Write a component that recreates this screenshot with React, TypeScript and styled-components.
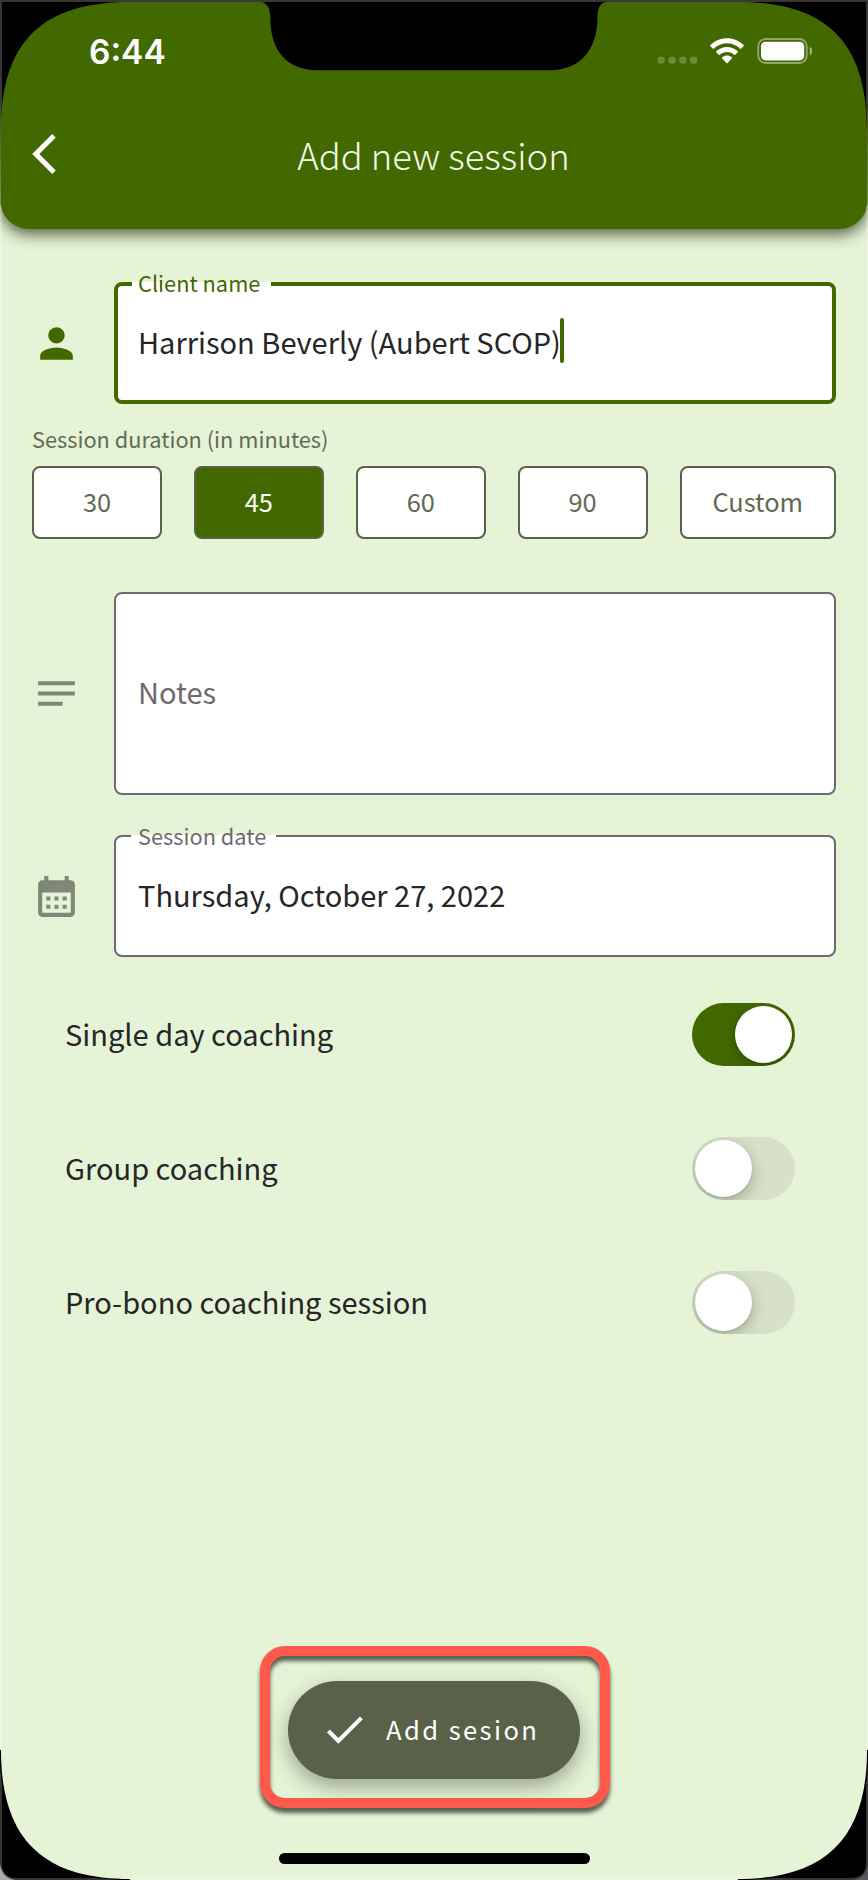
import React, { useState } from "react";
import styled, { createGlobalStyle } from "styled-components";

const green = "#426900";
const olive = "#596148";
const mint = "#e5f3d6";
const grey = "#6e6b70";

const GlobalStyle = createGlobalStyle`
  * { box-sizing: border-box; }
  html, body { margin: 0; padding: 0; background: #000; }
  body { font-family: "Noto Sans CJK SC", "Noto Sans", sans-serif; color: #262727; }
  button { font: inherit; cursor: pointer; }
`;

const Screen = styled.main`
  position: relative;
  display: flex;
  flex-direction: column;
  width: 868px;
  height: 1880px;
  overflow: hidden;
  background: ${mint};
`;

const Bezel = styled.svg`
  position: absolute;
  inset: 0;
  pointer-events: none;
`;

const Header = styled.header`
  flex: none;
  height: 229px;
  background: ${green};
  border-radius: 0 0 29px 29px;
  box-shadow: 0 5px 15px rgba(30, 40, 15, 0.75);
  color: #fff;
`;

const StatusBar = styled.div`
  display: flex;
  justify-content: space-between;
  height: 104px;
  padding: 38px 56px 0 89px;
`;

const Time = styled.span`
  padding-top: 1px;
  font: 600 33.5px/26px Inter, sans-serif;
`;

const StatusIcons = styled.svg`
  width: 156px;
  height: 27px;
`;

const NavBar = styled.div`
  display: grid;
  grid-template-columns: 60px 1fr 60px;
  align-items: center;
  height: 100px;
  padding: 0 33px 0 32px;
`;

const IconButton = styled.button`
  display: flex;
  padding: 0;
  border: 0;
  background: none;
  color: inherit;
`;

const Title = styled.h1`
  margin: 0 0 1px;
  text-align: center;
  font-size: 36.4px;
  font-weight: 300;
  line-height: 54px;
  color: #f4f8ec;
`;

const Form = styled.form`
  display: flex;
  flex-direction: column;
  flex: 1;
  padding: 53px 32px 0;
`;

const FieldRow = styled.div<{ $color: string; $gap?: number }>`
  display: grid;
  grid-template-columns: 49px 722px;
  column-gap: 33px;
  align-items: center;
  margin-top: ${(p) => p.$gap ?? 0}px;
  color: ${(p) => p.$color};
`;

const Field = styled.div<{ $height: number; $active?: boolean }>`
  position: relative;
  display: flex;
  align-items: center;
  height: ${(p) => p.$height}px;
  padding-left: ${(p) => (p.$active ? 20 : 22)}px;
  padding-bottom: 5px;
  border: ${(p) => (p.$active ? `4px solid ${green}` : `2px solid ${grey}`)};
  border-radius: 8px;
  background: #fff;
`;

const FloatingLabel = styled.label<{ $width: number; $active?: boolean }>`
  position: absolute;
  top: ${(p) => (p.$active ? -4 : -2)}px;
  left: ${(p) => (p.$active ? 14 : 15)}px;
  width: ${(p) => p.$width}px;
  height: 4px;
  padding-left: ${(p) => (p.$active ? 6 : 7)}px;
  background: #fff;
  font-size: 21.8px;
  line-height: 1px;
  white-space: nowrap;
  color: ${(p) => (p.$active ? green : grey)};
`;

const Value = styled.span<{ $muted?: boolean }>`
  font-size: 29.03px;
  line-height: 44px;
  white-space: nowrap;
  color: ${(p) => (p.$muted ? grey : "#262628")};
`;

const Caret = styled.i`
  width: 4px;
  height: 45px;
  margin: 0 0 0 -1px;
  border-radius: 2px;
  background: ${green};
`;

const DurationLabel = styled.div`
  margin-top: 19px;
  font-size: 21.77px;
  line-height: 32px;
  color: #636b54;
`;

const Durations = styled.div`
  display: grid;
  grid-template-columns: repeat(4, 130px) 156.5px;
  justify-content: space-between;
  margin-top: 11px;
`;

const Duration = styled.button<{ $selected: boolean }>`
  height: 73px;
  padding: 0 0 3px;
  border: 2px solid ${olive};
  border-radius: 8px;
  background: ${(p) => (p.$selected ? green : "#fff")};
  color: ${(p) => (p.$selected ? "#fff" : "#616952")};
  font-size: 25.4px;
`;

const Toggles = styled.div`
  margin-top: 10px;
  padding: 0 41px 0 33px;
`;

const ToggleRow = styled.div`
  display: flex;
  justify-content: space-between;
  align-items: center;
  height: 134px;

  ${Value} {
    margin-bottom: 2px;
  }
`;

const Track = styled.button<{ $on: boolean }>`
  display: flex;
  justify-content: ${(p) => (p.$on ? "flex-end" : "flex-start")};
  width: 103.5px;
  height: 63px;
  padding: 3px;
  border: 0;
  border-radius: 32px;
  overflow: hidden;
  background: ${(p) => (p.$on ? green : "#d6e1c8")};
`;

const Knob = styled.span`
  width: 57px;
  height: 57px;
  border-radius: 50%;
  background: #fff;
  box-shadow: 0 5px 16px rgba(0, 0, 0, 0.24), 0 2px 3px rgba(0, 0, 0, 0.08);
`;

const Highlight = styled.div`
  width: 350px;
  height: 162px;
  margin-left: 2px;
  border: 10px solid #ff594b;
  border-radius: 25px;
  filter: drop-shadow(0 5px 2px rgba(30, 38, 25, 0.72));
  pointer-events: none;
`;

const ActionSlot = styled.div`
  display: grid;
  place-items: center;
  margin-top: auto;
  > * { grid-area: 1 / 1; }
`;

const AddButton = styled.button`
  display: flex;
  align-items: center;
  gap: 17px;
  width: 292px;
  height: 98px;
  margin: 5px 0 0;
  padding: 0 0 0 32px;
  border: 0;
  border-radius: 49px;
  background: ${olive};
  box-shadow: 0 8px 20px rgba(50, 60, 40, 0.42);
  color: #fff;
  font-size: 25.6px;
  letter-spacing: 2.4px;
`;

const ButtonText = styled.span`
  padding-bottom: 2px;
`;

const HomeIndicator = styled.div`
  flex: none;
  align-self: center;
  width: 311px;
  height: 11px;
  margin: 45px 0 16px 1px;
  border-radius: 6px;
  background: #000;
`;

const Icon = ({ d }: { d: string }) => (
  <svg width="49" height="49" viewBox="0 0 24 24" fill="currentColor">
    <path d={d} />
  </svg>
);

const icons = {
  person: "M12 12c2.21 0 4-1.79 4-4s-1.79-4-4-4-4 1.79-4 4 1.79 4 4 4zm0 2c-2.67 0-8 1.34-8 4v2h16v-2c0-2.66-5.33-4-8-4z",
  notes: "M3 6h18v2H3zM3 11h18v2H3zM3 16h12v2H3z",
  calendar:
    "M19 4h-1V2h-2v2H8V2H6v2H5c-1.1 0-2 .9-2 2v14c0 1.1.9 2 2 2h14c1.1 0 2-.9 2-2V6c0-1.1-.9-2-2-2zm0 16H5V10h14v10zM9 14H7v-2h2v2zm4 0h-2v-2h2v2zm4 0h-2v-2h2v2zm-8 4H7v-2h2v2zm4 0h-2v-2h2v2zm4 0h-2v-2h2v2z",
  check: "M9 16.17L4.83 12l-1.42 1.41L9 19 21 7l-1.41-1.41z",
};

const StatusGlyphs = () => (
  <StatusIcons viewBox="0 0 156 27" fill="#fff">
    <g opacity="0.22">
      {[1.5, 12.5, 23.3, 34].map((x) => (
        <rect key={x} x={x} y="18.7" width="7.2" height="7" rx="2.4" />
      ))}
    </g>
    <path d="M71 0.2C77.3 0.2 83.2 2.7 87.600 7Q88.2 7.600 87.600 8.200L85.300 10.600Q84.700 11.200 84.100 10.600C80.600 7.200 76 5.300 71 5.300S61.400 7.200 57.900 10.600Q57.300 11.200 56.700 10.600L54.400 8.200Q53.800 7.600 54.400 7C58.800 2.700 64.700.2 71 .2Z" />
    <path d="M71 8.9C75 8.9 78.8 10.5 81.7 13.1Q82.3 13.7 81.7 14.3L79.3 16.7Q78.7 17.3 78.1 16.8C76.2 15 73.7 14 71 14S65.8 15 63.9 16.8Q63.3 17.3 62.7 16.7L60.3 14.3Q59.7 13.7 60.3 13.1C63.2 10.5 67 8.9 71 8.9Z" />
    <path d="M71 17.5C72.8 17.5 74.5 18.1 75.8 19.2Q76.4 19.8 75.8 20.4L71.6 24.9Q71 25.5 70.4 24.9L66.2 20.4Q65.6 19.8 66.2 19.2C67.5 18.1 69.2 17.5 71 17.5Z" />
    <rect x="102.2" y="1" width="48.6" height="24" rx="7.5" fill="none" stroke="#fff" strokeWidth="1.8" opacity="0.42" />
    <rect x="105" y="3.7" width="43.2" height="18.7" rx="4.5" />
    <path d="M153.8 9C157.3 10.4 157.3 15.8 153.8 17.2Z" opacity="0.5" />
  </StatusIcons>
);

const DeviceBezel = () => (
  <Bezel width="868" height="1880" viewBox="0 0 868 1880">
    <defs>
      <linearGradient id="edge" x1="0" y1="95" x2="0" y2="205" gradientUnits="userSpaceOnUse">
        <stop offset="0" stopColor="#373737" />
        <stop offset="0.5" stopColor="#5b743a" />
        <stop offset="1" stopColor="#789657" />
      </linearGradient>
    </defs>
    <path d="M0 205H2V1760H0ZM866 205H868V1760H866ZM120 1878H748V1880H120Z" fill="#fff" opacity="0.25" />
    <path d="M0 0H150L130 2C42 2 1 42 1 130H0Z" />
    <path d="M868 0H718L738 2C826 2 867 42 867 130H868Z" />
    <path d="M0 1750H1C1 1838 42 1879 130 1879V1880H0Z" />
    <path d="M868 1750H867C867 1838 826 1879 738 1879V1880H868Z" />
    <path d="M257 1C267 2 270 7 270.3 17C270 52 288 70.2 317 70.2H550C580 70 597.5 50 597.5 17C597.5 7 600 2 611 1Z" />
    <path d="M0 0H868V2H0Z" fill="#373737" />
    <path d="M0 2H2V96H0ZM866 2H868V96H866Z" fill="#373737" />
    <path d="M0 96H2L1 125V205H0ZM868 96H866L867 125V205H868Z" fill="url(#edge)" />
    <path d="M0 1765L2 1785V1863Q2 1878 17 1878H95L120 1880H0ZM868 1765L866 1785V1863Q866 1878 851 1878H773L748 1880H868Z" fill="#373637" />
    <path d="M0 1864Q2 1878 15 1880H0Z" fill="#aaa" />
    <path d="M868 1864Q866 1878 853 1880H868Z" fill="#5b595d" />
  </Bezel>
);

const options = ["30", "45", "60", "90", "Custom"];

export default function App() {
  const [duration, setDuration] = useState("45");
  const [toggles, setToggles] = useState([
    { label: "Single day coaching", on: true },
    { label: "Group coaching", on: false },
    { label: "Pro-bono coaching session", on: false },
  ]);
  const flip = (index: number) =>
    setToggles(toggles.map((t, i) => (i === index ? { ...t, on: !t.on } : t)));

  return (
    <>
      <GlobalStyle />
      <Screen>
        <Header>
          <StatusBar>
            <Time>6:44</Time>
            <StatusGlyphs />
          </StatusBar>
          <NavBar>
            <IconButton aria-label="Back">
              <svg width="24" height="40" viewBox="0 2.1 11.67 19.8" fill="#fff">
                <path d="M11.67 3.87L9.9 2.1 0 12l9.9 9.9 1.77-1.77L3.54 12z" />
              </svg>
            </IconButton>
            <Title>Add new session</Title>
          </NavBar>
        </Header>
        <Form onSubmit={(e) => e.preventDefault()}>
          <FieldRow $color={green}>
            <Icon d={icons.person} />
            <Field $height={122} $active>
              <FloatingLabel $width={139} $active>Client name</FloatingLabel>
              <Value>Harrison Beverly (Aubert SCOP)</Value>
              <Caret />
            </Field>
          </FieldRow>
          <DurationLabel>Session duration (in minutes)</DurationLabel>
          <Durations>
            {options.map((o) => (
              <Duration key={o} type="button" $selected={o === duration} onClick={() => setDuration(o)}>
                {o}
              </Duration>
            ))}
          </Durations>
          <FieldRow $color="#7f8876" $gap={53}>
            <Icon d={icons.notes} />
            <Field $height={203}>
              <Value $muted>Notes</Value>
            </Field>
          </FieldRow>
          <FieldRow $color="#7f8876" $gap={40}>
            <Icon d={icons.calendar} />
            <Field $height={122}>
              <FloatingLabel $width={145}>Session date</FloatingLabel>
              <Value>Thursday, October 27, 2022</Value>
            </Field>
          </FieldRow>
          <Toggles>
            {toggles.map((t, i) => (
              <ToggleRow key={t.label}>
                <Value>{t.label}</Value>
                <Track type="button" role="switch" aria-checked={t.on} aria-label={t.label} $on={t.on} onClick={() => flip(i)}>
                  <Knob />
                </Track>
              </ToggleRow>
            ))}
          </Toggles>
          <ActionSlot>
            <AddButton>
              <Icon d={icons.check} />
              <ButtonText>Add sesion</ButtonText>
            </AddButton>
            <Highlight />
          </ActionSlot>
        </Form>
        <HomeIndicator />
        <DeviceBezel />
      </Screen>
    </>
  );
}
